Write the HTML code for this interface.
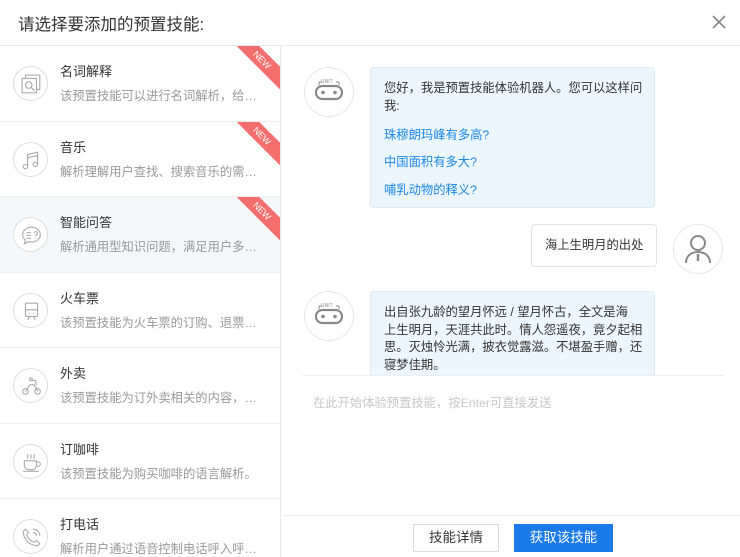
<!DOCTYPE html>
<html><head><meta charset="utf-8"><style>
*{margin:0;padding:0;box-sizing:border-box}
body{width:740px;height:557px;overflow:hidden;background:#fff;font-family:"Liberation Sans","Noto Sans CJK SC",sans-serif;color:#333;position:relative}
.hd{position:absolute;left:0;top:0;width:740px;height:46px;border-bottom:1px solid #e8e8e8}
.hd h1{position:absolute;left:18px;top:11px;font-size:16.5px;font-weight:normal;color:#333}
.x{position:absolute;right:14px;top:15px}
.left{position:absolute;left:0;top:46px;width:281px;height:511px;border-right:1px solid #e8e8e8;overflow:hidden}
.row{position:relative;height:75.5px;border-bottom:1px solid #eee;overflow:hidden}
.row.sel{background:#f5f7fa}
.ic{position:absolute;left:13px;top:20px;width:35px;height:35px;border:1px solid #ddd;border-radius:50%;background:#fff}
.ic svg{position:absolute;left:7px;top:7px}
.t{position:absolute;left:60px;top:15px;font-size:13px;color:#333}
.d{position:absolute;left:60px;top:40px;font-size:12.3px;color:#999;white-space:nowrap}
.new{position:absolute;right:-22px;top:6px;width:80px;height:16px;background:#f46e6e;transform:rotate(45deg);color:#fff;font-size:9px;text-align:center;line-height:16px}
.av{position:absolute;width:50px;height:50px;border:1px solid #e6e6e6;border-radius:50%;background:#fff}
.b{position:absolute;border:1px solid #e3e3e3;border-radius:4px;font-size:12.3px;line-height:17.5px;padding:12px 13px;white-space:nowrap;overflow:hidden}
.b.bot{background:#ecf6fe;border-color:#dfe9f2}
.lk{color:#1e88e5;margin-top:10px}
.inp{position:absolute;left:313px;top:393px;font-size:12.3px;color:#c8c8c8}
.btn{position:absolute;top:524px;height:28px;font-size:13.5px;text-align:center;line-height:26px}
</style></head><body>
<div class="hd"><h1>请选择要添加的预置技能:</h1>
<svg class="x" width="14" height="14" viewBox="0 0 14 14"><path d="M1 1L13 13M13 1L1 13" stroke="#888" stroke-width="1.6"/></svg></div>
<div class="left">
<div class="row"><div class="ic"><svg width="21" height="21" viewBox="0 0 19 19" fill="none" stroke="#aaa" stroke-width="1"><rect x="1" y="4" width="13" height="13"/><path d="M4 4V1h13v13h-3"/><circle cx="7" cy="10" r="3"/><path d="M9 12l3 3"/></svg></div><div class="t">名词解释</div><div class="d">该预置技能可以进行名词解析，给…</div><div class="new">NEW</div></div>
<div class="row"><div class="ic"><svg width="21" height="21" viewBox="0 0 19 19" fill="none" stroke="#aaa" stroke-width="1"><path d="M6 15V4l9-2v11M6 7l9-2"/><circle cx="4" cy="15" r="2"/><circle cx="13" cy="13" r="2"/></svg></div><div class="t">音乐</div><div class="d">解析理解用户查找、搜索音乐的需…</div><div class="new">NEW</div></div>
<div class="row sel"><div class="ic"><svg width="21" height="21" viewBox="0 0 19 19" fill="none" stroke="#aaa" stroke-width="1"><path d="M9.5 2C5 2 1.5 5 1.5 9c0 2 1 3.5 2.5 4.5L3 17l4-2c1 .3 1.6.4 2.5.4 4.5 0 8-3 8-6.5S14 2 9.5 2z"/><path d="M5 7h4M5 9.5h4M5 12h4M12 7.5a1.5 1.5 0 1 1 1.5 1.5v1.2M13.5 12v.5"/></svg></div><div class="t">智能问答</div><div class="d">解析通用型知识问题，满足用户多…</div><div class="new">NEW</div></div>
<div class="row"><div class="ic"><svg width="21" height="21" viewBox="0 0 19 19" fill="none" stroke="#aaa" stroke-width="1"><rect x="4" y="2" width="11" height="12" rx="1"/><path d="M4 8h11M6 17l2-3M13 17l-2-3M7 11h1M11 11h1"/></svg></div><div class="t">火车票</div><div class="d">该预置技能为火车票的订购、退票…</div></div>
<div class="row"><div class="ic"><svg width="21" height="21" viewBox="0 0 19 19" fill="none" stroke="#aaa" stroke-width="1"><circle cx="4" cy="14" r="2.5"/><circle cx="15" cy="14" r="2.5"/><path d="M4 14l4-6h4l3 6M10 4h3l1 4"/><circle cx="9" cy="3" r="1.2"/></svg></div><div class="t">外卖</div><div class="d">该预置技能为订外卖相关的内容，…</div></div>
<div class="row"><div class="ic"><svg width="21" height="21" viewBox="0 0 19 19" fill="none" stroke="#aaa" stroke-width="1"><path d="M3 8h11v4a4 4 0 0 1-4 4H7a4 4 0 0 1-4-4zM14 9h1.5a2 2 0 0 1 0 4H14M2 17.5h14M6 2v4M9 2v4M12 2v4"/></svg></div><div class="t">订咖啡</div><div class="d">该预置技能为购买咖啡的语言解析。</div></div>
<div class="row"><div class="ic"><svg width="21" height="21" viewBox="0 0 19 19" fill="none" stroke="#aaa" stroke-width="1"><path d="M4 2l3 3-2 2c1 3 4 6 7 7l2-2 3 3-2 2C8 17 2 11 2 4z"/><path d="M11 2a6 6 0 0 1 6 6M11 5a3 3 0 0 1 3 3"/></svg></div><div class="t">打电话</div><div class="d">解析用户通过语音控制电话呼入呼…</div></div>
</div>

<div class="av" style="left:304px;top:67px"><svg width="48" height="48" viewBox="0 0 48 48"><text x="16" y="15" font-size="5" fill="#888" font-family="Liberation Sans">UNIT</text><path d="M14 14v3M34 14v3M14 14h3M31 14h3" stroke="#888" stroke-width="1"/><rect x="11" y="18" width="26" height="13" rx="6.5" fill="none" stroke="#888" stroke-width="2.2"/><circle cx="18" cy="24.5" r="1.8" fill="#888"/><circle cx="30" cy="24.5" r="1.8" fill="#888"/></svg></div>
<div class="b bot" style="left:370px;top:67px;width:285px;height:141px">您好，我是预置技能体验机器人。您可以这样问<br>我:<div class="lk" style="margin-top:11.5px">珠穆朗玛峰有多高?</div><div class="lk">中国面积有多大?</div><div class="lk">哺乳动物的释义?</div></div>
<div class="b" style="left:531px;top:224px;width:126px;height:43px;padding:11px 13px;line-height:19px">海上生明月的出处</div>
<div class="av" style="left:673px;top:224px"><svg width="48" height="48" viewBox="0 0 48 48" fill="none" stroke="#888" stroke-width="2"><circle cx="24" cy="18" r="7"/><path d="M12 38c0-7 5-11 12-11s12 4 12 11"/><path d="M24 29v7" stroke-width="2.5"/></svg></div>
<div class="av" style="left:304px;top:291px"><svg width="48" height="48" viewBox="0 0 48 48"><text x="16" y="15" font-size="5" fill="#888" font-family="Liberation Sans">UNIT</text><path d="M14 14v3M34 14v3M14 14h3M31 14h3" stroke="#888" stroke-width="1"/><rect x="11" y="18" width="26" height="13" rx="6.5" fill="none" stroke="#888" stroke-width="2.2"/><circle cx="18" cy="24.5" r="1.8" fill="#888"/><circle cx="30" cy="24.5" r="1.8" fill="#888"/></svg></div>
<div class="b bot" style="left:370px;top:291px;width:285px;height:100px;border-bottom:none;border-radius:4px 4px 0 0">出自张九龄的望月怀远 / 望月怀古，全文是海<br>上生明月，天涯共此时。情人怨遥夜，竟夕起相<br>思。灭烛怜光满，披衣觉露滋。不堪盈手赠，还<br>寝梦佳期。</div>
<div style="position:absolute;left:281px;top:375px;width:459px;height:182px;background:#fff"></div>
<div style="position:absolute;left:303px;top:375px;width:421px;border-top:1px solid #eee"></div>
<div class="inp">在此开始体验预置技能，按Enter可直接发送</div>
<div style="position:absolute;left:283px;top:515px;width:457px;border-top:1px solid #eee"></div>
<div class="btn" style="left:413px;width:86px;border:1px solid #ddd;color:#333">技能详情</div>
<div class="btn" style="left:514px;width:99px;background:#1a7ae8;color:#fff;line-height:28px">获取该技能</div>
</body></html>
